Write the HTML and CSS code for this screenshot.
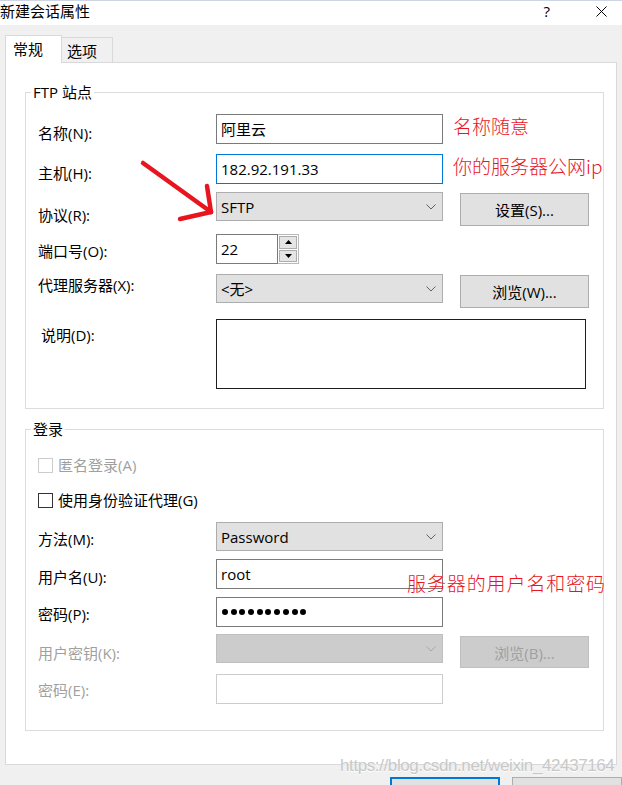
FILE: index.html
```html
<!DOCTYPE html>
<html lang="zh-CN">
<head>
  <meta charset="UTF-8" />
  <meta name="viewport" content="width=device-width, initial-scale=1.0"/>
  <title>新建会话属性</title>
  <link rel="stylesheet" href="styles.css">
</head>
<body>

  <div class="titlebar">
    <span class="title">新建会话属性</span>
    <span class="help">?</span>
    <svg class="close" width="11" height="11" viewBox="0 0 11 11">
      <path d="M0.5 0.5 L10.5 10.5 M10.5 0.5 L0.5 10.5" stroke="#000" stroke-width="1" fill="none"/>
    </svg>
  </div>

  <div class="tabs">
    <div class="tab active">常规</div>
    <div class="tab">选项</div>
  </div>

  <div class="panel">
    <fieldset class="group group-ftp">
      <legend>FTP 站点</legend>

      <div class="row row-name">
        <span class="lbl">名称(N):</span>
        <div class="field">阿里云</div>
        <span class="note">名称随意</span>
      </div>

      <div class="row row-host">
        <span class="lbl">主机(H):</span>
        <div class="field focused">182.92.191.33</div>
        <span class="note">你的服务器公网ip</span>
      </div>

      <div class="row row-proto">
        <span class="lbl">协议(R):</span>
        <div class="select">
          <span>SFTP</span>
          <svg class="chevron" width="10" height="6" viewBox="0 0 10 6"><polyline points="0.5,0.5 5,5 9.5,0.5" fill="none" stroke="#606060" stroke-width="1"/></svg>
        </div>
        <div class="btn side-btn">设置(S)...</div>
      </div>

      <div class="row row-port">
        <span class="lbl">端口号(O):</span>
        <div class="spin">
          <div class="spin-input">22</div>
          <div class="spin-box">
            <div class="spin-btn"><svg width="7" height="4" viewBox="0 0 7 4"><polygon points="3.5,0 7,4 0,4" fill="#000"/></svg></div>
            <div class="spin-btn"><svg width="7" height="4" viewBox="0 0 7 4"><polygon points="0,0 7,0 3.5,4" fill="#000"/></svg></div>
          </div>
        </div>
      </div>

      <div class="row row-proxy">
        <span class="lbl">代理服务器(X):</span>
        <div class="select">
          <span>&lt;无&gt;</span>
          <svg class="chevron" width="10" height="6" viewBox="0 0 10 6"><polyline points="0.5,0.5 5,5 9.5,0.5" fill="none" stroke="#606060" stroke-width="1"/></svg>
        </div>
        <div class="btn side-btn">浏览(W)...</div>
      </div>

      <div class="row row-desc">
        <span class="lbl">说明(D):</span>
        <div class="textarea"></div>
      </div>
    </fieldset>

    <fieldset class="group group-login">
      <legend>登录</legend>

      <div class="row check-row row-anon disabled">
        <span class="box"></span>
        <span>匿名登录(A)</span>
      </div>

      <div class="row check-row row-agent">
        <span class="box"></span>
        <span>使用身份验证代理(G)</span>
      </div>

      <div class="row row-method">
        <span class="lbl">方法(M):</span>
        <div class="select">
          <span>Password</span>
          <svg class="chevron" width="10" height="6" viewBox="0 0 10 6"><polyline points="0.5,0.5 5,5 9.5,0.5" fill="none" stroke="#606060" stroke-width="1"/></svg>
        </div>
      </div>

      <div class="row row-user">
        <span class="lbl">用户名(U):</span>
        <div class="field">root</div>
      </div>

      <div class="row row-pass">
        <span class="lbl">密码(P):</span>
        <div class="field dots">
          <i></i><i></i><i></i><i></i><i></i><i></i><i></i><i></i><i></i><i></i>
        </div>
      </div>

      <div class="row row-key disabled">
        <span class="lbl">用户密钥(K):</span>
        <div class="select">
          <span></span>
          <svg class="chevron" width="10" height="6" viewBox="0 0 10 6"><polyline points="0.5,0.5 5,5 9.5,0.5" fill="none" stroke="#a8a8a8" stroke-width="1"/></svg>
        </div>
        <div class="btn side-btn">浏览(B)...</div>
      </div>

      <div class="row row-phrase disabled">
        <span class="lbl">密码(E):</span>
        <div class="field"></div>
      </div>
    </fieldset>
  </div>

  <div class="actions">
    <div class="btn action primary"></div>
    <div class="btn action"></div>
  </div>

  <!-- red marks drawn over the screenshot -->
  <svg class="arrow" width="90" height="75" viewBox="0 0 90 75">
    <g stroke="#e8141e" stroke-width="4.5" stroke-linecap="round" fill="none">
      <path d="M8 8 L76 57"/>
      <path d="M72 31 L76 57"/>
      <path d="M45 64 L76 57"/>
    </g>
  </svg>
  <span class="note note-login">服务器的用户名和密码</span>

  <span class="watermark">https://blog.csdn.net/weixin_42437164</span>

</body>
</html>
```

FILE: styles.css
```css
* {
  box-sizing: border-box;
}

html, body {
  margin: 0;
}

body {
  position: relative;
  width: 622px;
  height: 785px;
  overflow: hidden;
  background: #f0f0f0;
  font-family: "Open Sans", "Noto Sans CJK SC", sans-serif;
  font-size: 15px;
  color: #000;
}

/* title bar */
.titlebar {
  height: 25px;
  background: #fff;
  border-top: 1px solid #ccd5e1;
  display: flex;
  align-items: flex-start;
}

.title {
  flex: 1;
  line-height: 20px;
}

.help {
  line-height: 20px;
  margin-right: 46px;
}

.close {
  margin-top: 5px;
  margin-right: 15px;
}

/* tabs */
.tabs {
  display: flex;
  align-items: flex-end;
  height: 38px;
  margin-bottom: -1px;
  padding-left: 5px;
  position: relative;
  z-index: 1;
}

.tab {
  height: 25px;
  width: 51px;
  margin-bottom: 1px;
  padding: 3px 0 0 5px;
  line-height: 20px;
  background: #f0f0f0;
  border: 1px solid #d9d9d9;
  border-left: none;
  border-bottom: none;
}

.tab.active {
  height: 28px;
  width: 57px;
  margin-bottom: 0;
  padding-left: 7px;
  background: #fff;
  border-left: 1px solid #d9d9d9;
}

/* page */
.panel {
  margin-left: 5px;
  width: 612px;
  height: 703px;
  background: #fff;
  border: 1px solid #d9d9d9;
  padding: 19px 12px 0 19px;
}

.group {
  margin: 0;
  padding: 0;
  min-width: 0;
  border: 1px solid #dcdcdc;
}

.group legend {
  margin-left: 5px;
  padding: 0 2px;
  line-height: 20px;
}

.group-ftp {
  padding-bottom: 19px;
}

.group-login {
  margin-top: 10px;
  padding-bottom: 26px;
}

.row {
  display: flex;
  align-items: flex-start;
  padding-left: 12px;
}

.lbl {
  flex: none;
  width: 178px;
  line-height: 20px;
  white-space: nowrap;
}

/* row spacing, ftp */
.row-name { margin-top: 12px; }
.row-name .lbl { margin-top: 9px; }
.row-host { margin-top: 10px; }
.row-host .lbl { margin-top: 9px; }
.row-proto { margin-top: 8px; }
.row-proto .lbl { margin-top: 13px; }
.row-port { margin-top: 8px; }
.row-port .lbl { margin-top: 7px; }
.row-proxy { margin-top: 10px; }
.row-proxy .lbl { margin-top: 1px; }
.row-desc { margin-top: 11px; }
.row-desc .lbl { margin-top: 6px; padding-left: 3px; }

/* row spacing, login */
.row-anon { margin-top: 16px; }
.row-agent { margin-top: 15px; }
.row-method { margin-top: 12px; }
.row-method .lbl { margin-top: 7px; }
.row-user { margin-top: 8px; }
.row-user .lbl { margin-top: 8px; }
.row-pass { margin-top: 8px; }
.row-pass .lbl { margin-top: 7px; }
.row-key { margin-top: 7px; }
.row-key .lbl { margin-top: 9px; }
.row-phrase { margin-top: 6px; }
.row-phrase .lbl { margin-top: 6px; }

/* controls */
.field {
  flex: none;
  width: 227px;
  height: 30px;
  padding: 0 4px;
  line-height: 28px;
  border: 1px solid #7a7a7a;
  background: #fff;
  white-space: nowrap;
}

.field.focused {
  border-color: #0078d7;
}

.field.dots {
  display: flex;
  align-items: center;
  gap: 2.7px;
  padding-left: 5px;
}

.field.dots i {
  width: 6px;
  height: 6px;
  border-radius: 50%;
  background: #000;
}

.select {
  flex: none;
  width: 227px;
  height: 29px;
  padding: 0 6px 0 4px;
  display: flex;
  align-items: center;
  justify-content: space-between;
  background: #e1e1e1;
  border: 1px solid #adadad;
}

.btn {
  display: flex;
  align-items: center;
  justify-content: center;
  background: #e1e1e1;
  border: 1px solid #adadad;
}

.side-btn {
  flex: none;
  width: 129px;
  height: 33px;
  margin-left: 17px;
  margin-top: 1px;
}

.row-key .side-btn {
  height: 32px;
  margin-top: 2px;
}

.textarea {
  width: 370px;
  height: 70px;
  border: 1px solid #1e1e1e;
}

.spin {
  display: flex;
  height: 30px;
}

.spin-input {
  width: 62px;
  height: 30px;
  padding: 0 4px;
  line-height: 28px;
  border: 1px solid #7a7a7a;
}

.spin-box {
  width: 21px;
  height: 30px;
  padding: 1px;
  display: flex;
  flex-direction: column;
  gap: 1px;
  border: 1px solid #b9b9b9;
  border-left: none;
}

.spin-btn {
  flex: 1;
  display: flex;
  align-items: center;
  justify-content: center;
  background: #e5e5e5;
  border: 1px solid #adadad;
}

/* check boxes */
.check-row {
  height: 20px;
  align-items: center;
  gap: 5px;
  line-height: 20px;
}

.box {
  width: 15px;
  height: 15px;
  border: 1px solid #333;
  background: #fff;
}

/* disabled state */
.disabled {
  color: #a0a0a0;
}

.disabled .box {
  border-color: #cccccc;
}

.disabled .select {
  background: #cccccc;
  border-color: #bfbfbf;
}

.disabled .btn {
  background: #cccccc;
  border-color: #bfbfbf;
}

.disabled .field {
  border-color: #cccccc;
}

/* dialog buttons, cut off by the screenshot */
.actions {
  display: flex;
  justify-content: flex-end;
  gap: 12px;
  margin-top: 12px;
}

.action {
  width: 110px;
  height: 30px;
}

.action.primary {
  border: 2px solid #0078d7;
}

/* annotations */
.note {
  flex: none;
  margin-left: 10px;
  font-family: "Noto Sans CJK SC", sans-serif;
  font-size: 19px;
  font-weight: 300;
  line-height: 24px;
  color: #e8141e;
  white-space: nowrap;
}

.note-login {
  position: absolute;
  left: 407px;
  top: 571px;
  margin: 0;
  letter-spacing: 0.9px;
}

.arrow {
  position: absolute;
  left: 135px;
  top: 155px;
}

.watermark {
  position: absolute;
  left: 340px;
  top: 757px;
  font-family: "Liberation Sans", Arial, sans-serif;
  font-size: 17px;
  letter-spacing: -0.4px;
  line-height: 18px;
  color: #c8c8c8;
  text-shadow: 0 1px 1px #fff;
  white-space: nowrap;
}
```
